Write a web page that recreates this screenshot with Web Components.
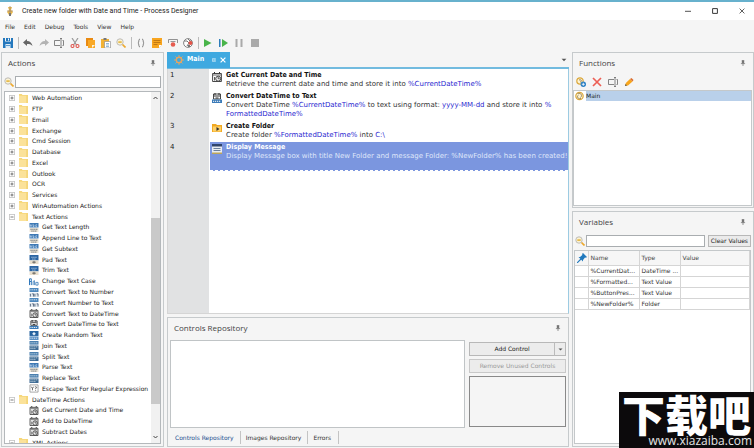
<!DOCTYPE html>
<html lang="en">
<head>
<meta charset="utf-8">
<title>Process Designer</title>
<style>
html,body{height:100%;margin:0}
body{font:6px/8px "DejaVu Sans",Verdana,sans-serif;color:#333;background:#f4f4f4;overflow:hidden;
--ui:#f5f5f5;--line:#c6cacc;--blue:#3fa9e0;--head:"Open Sans","Noto Sans",sans-serif}
</style>
</head>
<body>
<process-designer></process-designer>
<script>
const ICONS={
app:'<path d="M3 1h4l-1 3 2 2-2 3H4L2 6l2-2z" fill="#e8b84c"/><path d="M5 0v10M2 5h6" stroke="#a58a6a" stroke-width=".8"/><path d="M4 7h2v3H4z" fill="#777"/>',
save:'<path d="M0 0h2v3.500h6V0h2v10H0z" fill="#2478bd"/><path d="M3 0h4v3H3z" fill="#2478bd"/><path d="M5 .5h1v2H5z" fill="#fff"/><path d="M2.500 6h5v4h-5z" fill="#dcebf6"/><path d="M3 7.500h4" stroke="#2478bd" stroke-width=".7"/>',
undo:'<path d="M0 4.500 4 1v2c3 0 5 2 5.500 5C8 6.300 6.500 6 4 6v2z" fill="#666"/>',
redo:'<path d="M10 4.500 6 1v2C3 3 1 5 .5 8 2 6.300 3.500 6 6 6v2z" fill="#b3b3b3"/>',
rename:'<path d="M6 2.500H.5v5H6M8.500 2.500h1v5h-1" fill="none" stroke="#777" stroke-width=".9"/><path d="M6 .5h2M6 9.500h2M7 .5v9" stroke="#666" stroke-width=".8"/>',
cut:'<path d="M2 0 6.500 7M8 0 3.500 7" stroke="#999" stroke-width="1.200"/><circle cx="2.500" cy="8" r="1.500" fill="none" stroke="#e0564e" stroke-width="1.100"/><circle cx="7.500" cy="8" r="1.500" fill="none" stroke="#e0564e" stroke-width="1.100"/>',
copy:'<path d="M1 0h7v8H1z" fill="#e98a12"/><path d="M3 2h7v8H3z" fill="#f9a825"/><path d="M7 10V7h3z" fill="#fff3d9"/>',
paste:'<path d="M0 1h8v9H0z" fill="#f2b234"/><path d="M2.500 0h3v2h-3z" fill="#777"/><path d="M3.500 3.500H9.500v6.500h-6z" fill="#fff" stroke="#888" stroke-width=".6"/><path d="M5 5.500h3M5 7h3M5 8.500h3" stroke="#4d89bd" stroke-width=".6"/>',
find:'<circle cx="4" cy="4" r="3.200" fill="#fbf2d4" stroke="#b5b5b5" stroke-width=".9"/><path d="M2.300 3.300h3.400v1.600H2.300z" fill="#e2b53e"/><path d="m6.500 6.500 3 3" stroke="#eda92e" stroke-width="1.700"/>',
braces:'<path d="M4 1C2 1 3.500 4.500 2 5c1.500.5 0 4 2 4M6 1c2 0 .5 3.500 2 4-1.500.5 0 4-2 4" fill="none" stroke="#777" stroke-width=".9"/>',
note:'<path d="M0 0h10v7l-3 3H0z" fill="#f8a51f"/><path d="M1.500 2.500h7M1.500 4.500h7M1.500 6.500h4" stroke="#b36d10" stroke-width=".8"/><path d="M7 10V7h3z" fill="#fff"/>',
breakp:'<path d="M.5 5V1.500h9V5" fill="none" stroke="#888" stroke-width=".9"/><path d="M2.500 3.500h5" stroke="#999"/><circle cx="5" cy="6.500" r="2.300" fill="#e65d50"/>',
globe:'<circle cx="5" cy="5" r="4.400" fill="#fff" stroke="#777" stroke-width=".9"/><path d="M1 3h3l2 2-2 3M5 1l2 2h2" fill="none" stroke="#777"/><circle cx="7.500" cy="5" r="2" fill="#e45448"/><path d="m5 7 2 2M7 7 5 9" stroke="#777"/>',
play:'<path d="M1 1v8l7.500-4z" fill="#49b44a"/>',
step:'<path d="M0 1h1.500v8H0z" fill="#2d7dbb"/><path d="M3 1v8l6-4z" fill="#49b44a"/>',
pause:'<path d="M1.500 1h2v8h-2zM6.500 1h2v8h-2z" fill="#aaa"/>',
stop:'<path d="M1 1h8v8H1z" fill="#aaa"/>',
pin:'<path d="M3 1h4v4.500H3z" fill="#777"/><path d="M1.500 6h7M5 6v4M3 1h4" stroke="#555"/>',
gear:'<circle cx="5" cy="5" r="2.700" fill="none" stroke="#e7a55e" stroke-width="1.400"/><path d="M5 0v2M5 8v2M0 5h2M8 5h2M1.500 1.500 3 3M7 7l1.500 1.500M8.500 1.500 7 3M3 7 1.500 8.500" stroke="#d9a56a"/>',
close:'<path d="m1 1 8 8M9 1 1 9" stroke="currentColor" stroke-width="1.200"/>',
closeb:'<path d="m1 1 8 8M9 1 1 9" stroke="currentColor" stroke-width="2"/>',
lock:'<path d="M2 3h6M2 7h6M3 3v4M5 5h3" stroke="#e8f6fd" stroke-width="1.200"/>',
func:'<circle cx="5" cy="5" r="3.700" fill="#fff3cf" stroke="#dba83e" stroke-width="1.200"/><path d="M3 2.500C7 1.500 8 5 6 6.500M6.500 7.500C3 8.500 2 5 4 4" fill="none" stroke="#9c8a63"/>',
addf:'<circle cx="4" cy="4" r="3.200" fill="#fff3cf" stroke="#dba83e" stroke-width="1.200"/><path d="M3 3c3-1 3 2 1 2" fill="none" stroke="#98865f"/><circle cx="7.300" cy="7.300" r="2.700" fill="#2b80c4"/><path d="M5.800 7.300h3M7.300 5.800v3" stroke="#fff" stroke-width=".8"/>',
del:'<path d="m1 1 8 8M9 1 1 9" stroke="#ed5f55" stroke-width="1.700"/>',
pencil:'<path d="m1 9 .8-3L6 2l2.500 2.500L4 8.500z" fill="#f7a61d"/><path d="m6 2 1.500-1L9.500 3l-1 1.500z" fill="#db6f34"/><path d="m1 9 .5-2L3 8.500z" fill="#555"/>',
pushpin:'<path d="m6 0 4 4-1 .8-1-.2L6 7v1.500L1.500 4H3l2.300-2-.1-1.200z" fill="#1f78bd"/><path d="m4 6-4 4" stroke="#1f78bd" stroke-width="1.100"/>',
folder:'<path d="M0 0h3l1 1h6v9H0z" fill="#f5d679"/><path d="M0 2h8v8H0z" fill="#fbe29a"/>',
plus:'<path d="M.5.5h9v9h-9z" fill="#fff" stroke="#999"/><path d="M2.500 5h5M5 2.500v5" stroke="#555" stroke-width="1.300"/>',
minus:'<path d="M.5.5h9v9h-9z" fill="#fff" stroke="#999"/><path d="M2.500 5h5" stroke="#555" stroke-width="1.300"/>',
abc:'<path d="M0 0h10v5H0z" fill="#3c78b4"/><path d="M1 4V2h1v2M4 1v3h1V2.500M8.500 2H7v2h1.500" fill="none" stroke="#d6e6f5" stroke-width=".7"/><path d="M0 5.500h10V10H0z" fill="#ece5d6"/><path d="M1 7h8M2 9h6" stroke="#55626e" stroke-width=".9" stroke-dasharray="1.500 .6"/>',
pad:'<path d="M0 0h10v6H0z" fill="#2b65a3"/><path d="M2 2.500h6M3 4.500h4" stroke="#c6dcf1" stroke-width=".9" stroke-dasharray="1.500 .7"/><path d="M0 6h10v4H0z" fill="#e9dfcd"/><path d="M3 8h4M5 6.500v3" stroke="#555" stroke-width=".9"/>',
caseT:'<path d="M0 9V2h2v7M0 5h2" fill="none" stroke="#2e76ba" stroke-width="1.100"/><path d="M4 9V5l1.500-1v5M7 9V6h2.500v3H7" fill="none" stroke="#4b87bf"/>',
num:'<path d="M0 0h10v4.500H0z" fill="#4c87bd"/><path d="M1 2h8" stroke="#e1edf7" stroke-dasharray="1.300 .7"/><path d="M0 5.500h10V10H0z" fill="#dfe6ed"/><path d="M1 6.500v3M3 6.500h1.500v3M6 6.500v3M8 6.500h1.500v3" fill="none" stroke="#2f4661" stroke-width=".8"/>',
rnd:'<path d="M0 0h10v5.500H0z" fill="#27639f"/><path d="m5 1 2 2-2 2-2-2z" fill="#e8f1fa"/><path d="M0 6h10v4H0z" fill="#5a8fc3"/><path d="M1 8h8" stroke="#eaf3fb" stroke-dasharray="1.200 .8"/>',
join:'<path d="M0 0h10v4H0z" fill="#4a7fae"/><path d="M0 5h10v5H0z" fill="#3c6992"/><path d="M1 2h8M1 6.500h8M1 8.500h6" stroke="#d9e8ee" stroke-width=".9" stroke-dasharray="1.400 .7"/>',
regex:'<path d="M.5 1h9v8h-9z" fill="#fff" stroke="#888" stroke-width=".8"/><path d="m2 3 1.300 2L4.500 3M3.300 5v2M6 3.500c2-1.500 2.500 1 .8 1.500v.8M6.800 6.700v.8" fill="none" stroke="#333" stroke-width=".8"/>',
date:'<path d="M2.500 0v2M7.500 0v2" stroke="#333"/><path d="M.6 1.500h8.800v8H.6z" fill="#fff" stroke="#333" stroke-width=".9"/><path d="M1 3h8" stroke="#666"/><circle cx="6.200" cy="6.700" r="2.500" fill="#eee" stroke="#333" stroke-width=".9"/><path d="M6.200 5v1.700h1.500M2.500 5v3.500" stroke="#333" stroke-width=".8" fill="none"/>',
datetext:'<path d="M1.500 1h7v5h-7z" fill="#fff" stroke="#333" stroke-width=".9"/><path d="M3 0v2M7 0v2M2 3h6M3.500 5h3" stroke="#333"/><path d="M0 6.500h10V10H0z" fill="#3b7bb8"/><path d="M1 8.300h8" stroke="#fff" stroke-dasharray="1.200 .8"/>',
mkdir:'<path d="M0 1h4l1 1h5v7H0z" fill="#f1a922"/><path d="M1 3.500h8v5H1z" fill="#ffd067"/><path d="M4.500 4v4l3-2z" fill="#333"/>',
msg:'<path d="M0 0h10v10H0z" fill="#e9edf2"/><path d="M0 0h10v2.500H0z" fill="#30456b"/><path d="M1.500 4.500h7M1.500 6.500h7" stroke="#5f7593" stroke-width=".9"/><path d="M0 8.500h10V10H0z" fill="#bda55a"/>',
min:'<path d="M0 5.500h10" stroke="#222" stroke-width="1.300"/>',max:'<path d="M1 1h8v8H1z" fill="none" stroke="#222" stroke-width="1.500"/>',
down:'<path d="M1 3h8L5 7z" fill="#555"/>',arrowup:'<path d="m1 7 4-4 4 4" fill="none" stroke="#444" stroke-width="2"/>',arrowdown:'<path d="m1 3 4 4 4-4" fill="none" stroke="#444" stroke-width="2"/>'
};
const define=(name,html,setup)=>{
  const t=document.createElement('template');t.innerHTML=html;
  customElements.define(name,class extends HTMLElement{
    constructor(){super();this.attachShadow({mode:'open'}).append(t.content.cloneNode(true))}
    connectedCallback(){if(!this.ready){this.ready=true;setup&&setup(this,this.shadowRoot)}}
  });
};
const BTN='button{all:unset;box-sizing:border-box;display:flex;align-items:center;justify-content:center;cursor:default}';

define('ui-icon','<style>:host{display:block;flex:none;width:10px;height:10px}svg{display:block;width:100%;height:100%}</style><svg viewBox="0 0 10 10" aria-hidden="true"></svg>',
(h,r)=>{r.querySelector('svg').innerHTML=ICONS[h.getAttribute('name')]});

define('icon-button',`<style>:host{display:block;flex:none;width:10px;height:10px}${BTN}button,ui-icon{width:100%;height:100%}</style><button></button>`,
(h,r)=>{const b=r.querySelector('button');b.setAttribute('aria-label',h.getAttribute('label'));b.innerHTML=`<ui-icon name="${h.getAttribute('name')}"></ui-icon>`});

define('title-bar',`<style>:host{display:flex;align-items:center;gap:7px;height:18px;padding:0 9px 0 5px;border-top:2px solid #67b1cd;background:#fff;font:7px/10px Roboto,sans-serif;color:#222}
h1{font:inherit;margin:0;flex:1}.w{display:flex;gap:21px}.w icon-button{width:6px;height:6px}</style>
<ui-icon name="app"></ui-icon><h1><slot></slot></h1>
<div class="w"><icon-button name="min" label="Minimize"></icon-button><icon-button name="max" label="Maximize"></icon-button><icon-button name="close" label="Close"></icon-button></div>`);

define('menu-bar',`<style>:host{display:flex;gap:9px;height:14px;padding:0 5px;align-items:center}${BTN}</style>`,
(h,r)=>{for(const m of ['File','Edit','Debug','Tools','View','Help']){const b=document.createElement('button');b.textContent=m;r.append(b)}});

define('tool-bar',`<style>:host{display:flex;justify-content:space-between;width:257px;height:17px;padding:0 3px 1px;align-items:center}i{width:1px;height:12px;background:#bbb;margin:0 -1px}</style>`,
(h,r)=>{r.innerHTML+=h.getAttribute('items').split(' ').map(n=>n==='|'?'<i></i>':`<icon-button name="${n}" label="${n}"></icon-button>`).join('')});

define('dock-panel',`<style>:host{display:flex;flex-direction:column;min-width:0;min-height:0;box-sizing:border-box;border:1px solid var(--line);background:var(--ui)}
header{display:flex;align-items:center;justify-content:space-between;box-sizing:border-box;height:20px;padding:0 7px 1px 6px;flex:none}h2{margin:0;font:8px/12px var(--head);color:#444}
icon-button{width:6px;height:6px}</style>
<header><h2></h2><icon-button name="pin" label="Pin"></icon-button></header><slot></slot>`,
(h,r)=>{r.querySelector('h2').textContent=h.getAttribute('heading')});

define('search-field',`<style>:host{display:flex;align-items:center;gap:1px;height:12px;padding:0 2px;flex:1}
input{flex:1;min-width:0;height:100%;box-sizing:border-box;border:1px solid #a9adb0;background:#fff;padding:0 2px;font:inherit;outline:0}</style>
<ui-icon name="find"></ui-icon><input type="text">`,(h,r)=>{r.querySelector('input').setAttribute('aria-label',h.getAttribute('label'))});

define('action-tree',`<style>:host{display:flex;flex:1;min-height:0;overflow:hidden;border:1px solid #b4b8bb;background:#fff}
ul{list-style:none;margin:0 0 -5px;padding:1px 0 0 4px;flex:1;min-width:0;display:grid;grid-auto-rows:minmax(0,1fr)}
li{display:flex;align-items:center;gap:4px;white-space:nowrap;min-height:0;color:#222}
li.leaf{padding-left:20px;gap:3px}li icon-button{width:6px;height:6px}li ui-icon{width:9px;height:9px}.leaf ui-icon{width:10px}
.sb{width:9px;background:#f1f1f1;display:flex;flex-direction:column;align-items:center}.sb icon-button{width:5px;height:12px}
.track{flex:1;align-self:stretch;display:grid;grid-template-rows:115fr 187fr 27fr}.thumb{grid-row:2;background:#c9c9c9}</style>
<ul></ul><div class="sb"><icon-button name="arrowup" label="Scroll up"></icon-button><div class="track"><div class="thumb"></div></div><icon-button name="arrowdown" label="Scroll down"></icon-button></div>`,
(h,r)=>{const rows=`+Web Automation;+FTP;+Email;+Exchange;+Cmd Session;+Database;+Excel;+Outlook;+OCR;+Services;+WinAutomation Actions;-Text Actions;abc:Get Text Length;abc:Append Line to Text;abc:Get Subtext;pad:Pad Text;pad:Trim Text;caseT:Change Text Case;num:Convert Text to Number;num:Convert Number to Text;date:Convert Text to DateTime;datetext:Convert DateTime to Text;rnd:Create Random Text;join:Join Text;join:Split Text;abc:Parse Text;join:Replace Text;regex:Escape Text For Regular Expression;-DateTime Actions;date:Get Current Date and Time;date:Add to DateTime;date:Subtract Dates;-XML Actions`.split(';');
r.querySelector('ul').innerHTML=rows.map(x=>{const c=x[0];if(c==='+'||c==='-')return `<li><icon-button name="${c==='+'?'plus':'minus'}" label="${c==='+'?'Expand':'Collapse'}"></icon-button><ui-icon name="folder"></ui-icon><span>${x.slice(1)}</span></li>`;
const [i,t]=x.split(':');return `<li class="leaf"><ui-icon name="${i}"></ui-icon><span>${t}</span></li>`}).join('')});

define('process-step',`<style>:host{display:grid;grid-template-columns:42px 1fr;font:7px/9px "DejaVu Sans",Verdana,sans-serif;color:#333}
.n{padding:1px 2px;color:#222}.b{display:grid;grid-template-columns:10px 1fr;gap:4px;padding:1px 0 2px 2px;min-width:0}
h3{margin:0;font:bold 7px/9px "DejaVu Sans Condensed","DejaVu Sans",sans-serif;color:#111}p{margin:0;white-space:nowrap}::slotted(b){font-weight:normal;color:#2a1fd0}
:host([selected]) .b{background:#7b96df;color:#dfe6fa;padding-bottom:9px;border-bottom:1px dashed #fff}:host([selected]) h3{color:#fff}ui-icon{margin-top:1px}</style>
<span class="n"></span><div class="b"><ui-icon></ui-icon><div><h3></h3><p><slot></slot></p></div></div>`,
(h,r)=>{r.querySelector('.n').textContent=h.getAttribute('n');r.querySelector('h3').textContent=h.getAttribute('heading');
const i=document.createElement('ui-icon');i.setAttribute('name',h.getAttribute('icon'));r.querySelector('ui-icon').replaceWith(i)});

define('process-editor',`<style>:host{display:flex;flex-direction:column;min-width:0;min-height:0}
.tabs{display:flex;justify-content:space-between;align-items:center;height:15px;border-bottom:2px solid #72bbdf;padding-right:2px}
.tab{display:flex;align-items:center;gap:3px;padding:0 4px 0 7px;height:16px;background:var(--blue);color:#fff;font:bold 7px/9px "DejaVu Sans Condensed",sans-serif}
.tab .s{width:6px;height:6px}.tab ui-icon.s{margin-left:4px}.m{width:6px;height:6px}
main{flex:1;border-right:1px solid #9ccbe2;border-left:1px solid #d5d5d5;border-bottom:1px solid #d5d5d5;background:linear-gradient(90deg,#e1e2e3 41px,#fff 41px);padding-top:1px}</style>
<div class="tabs"><div class="tab"><ui-icon name="gear"></ui-icon><span>Main</span><ui-icon class="s" name="lock"></ui-icon><icon-button class="s" name="closeb" label="Close tab"></icon-button></div><icon-button class="m" name="down" label="Tab list"></icon-button></div>
<main><slot></slot></main>`);

define('controls-repository',`<style>:host{display:flex;flex-direction:column;flex:1;min-height:0}
.row{flex:1;display:grid;grid-template-columns:1fr 97px;gap:4px;padding:2px 2px 0}.list{border:1px solid #c0c4c6;background:#fff}
.side{display:grid;grid-template-rows:14px 14px 1fr;gap:3px;padding:2px 0 1px}${BTN}
.side button{border:1px solid #b8b8b8;background:#ececec;color:#222}.side button:disabled{color:#999;border-color:#c8c8c8}
.add{display:grid;grid-template-columns:1fr 11px}.side .add button+button{border-left:1px solid #bbb;margin-left:-1px}.add ui-icon{width:5px;height:5px}
.prev{border:1px solid #898989}nav{display:flex;height:17px;align-items:center;margin-top:1px}
nav button{padding:0 6px 0 5px;height:13px;border-right:1px solid #c4c4c4}nav button:first-child{padding-left:7px;padding-right:6px;color:#1b4f8f}nav button:last-child{padding-right:7px}</style>
<div class="row"><div class="list"></div><div class="side"><div class="add"><button>Add Control</button><button aria-label="More controls"><ui-icon name="down"></ui-icon></button></div><button disabled>Remove Unused Controls</button><div class="prev"></div></div></div>
<nav><button>Controls Repository</button><button>Images Repository</button><button>Errors</button></nav>`);

define('function-list',`<style>:host{display:flex;flex-direction:column;flex:1}.t{display:flex;gap:6px;height:17px;padding:0 3px;align-items:center}
ul{list-style:none;margin:0 1px 1px 0;padding:0;flex:1;background:#fff;border:1px solid #c4c8ca}li{display:flex;align-items:center;gap:1px;height:10px}ui-icon{width:11px}span{flex:1;background:#b9d0ea;padding:1px 0 1px;color:#222}</style>
<div class="t"><icon-button name="addf" label="Add function"></icon-button><icon-button name="del" label="Delete function"></icon-button><icon-button name="rename" label="Rename function"></icon-button><icon-button name="pencil" label="Edit function"></icon-button></div>
<ul><li><ui-icon name="func"></ui-icon><span>Main</span></li></ul>`);

define('variable-table',`<style>:host{display:flex;flex-direction:column;flex:1;min-height:0}.s{display:flex;gap:1px;padding:3px 2px 3px 0}${BTN}
.s button{border:1px solid #b8b8b8;background:#ebebeb;padding:0 2px;color:#222}.g{flex:1;background:#fff;border:1px solid #c4c8ca;margin:0 2px 2px 1px}
table{width:100%;table-layout:fixed;border-collapse:collapse}col:nth-child(1){width:13px}col:nth-child(2){width:51px}col:nth-child(3){width:41px}
th,td{box-sizing:border-box;border:0 solid #d5d5d5;border-width:0 1px 1px 0;height:11px;padding:0 2px;text-align:left;font-weight:normal;overflow:hidden;white-space:nowrap;text-overflow:clip;line-height:8px}th{height:14px;background:#f6f6f6;color:#444}</style>
<div class="s"><search-field label="Search variables"></search-field><button>Clear Values</button></div>
<div class="g"><table><colgroup><col><col><col><col></colgroup><thead><tr><th><ui-icon name="pushpin"></ui-icon></th><th>Name</th><th>Type</th><th>Value</th></tr></thead>
<tbody><tr><td></td><td>%CurrentDat...</td><td>DateTime ...</td><td></td></tr><tr><td></td><td>%Formatted...</td><td>Text Value</td><td></td></tr><tr><td></td><td>%ButtonPres...</td><td>Text Value</td><td></td></tr><tr><td></td><td>%NewFolder%</td><td>Folder</td><td></td></tr></tbody></table></div>`);

define('site-badge',`<style>:host{position:absolute;right:0;bottom:0;background:#0c0a0c;color:#fff;width:135px;height:56px;display:flex;flex-direction:column;align-items:center}
strong{font:900 43px/42px "Noto Sans CJK SC",sans-serif;white-space:nowrap}span{font:12px/14px "Open Sans",sans-serif;align-self:flex-end;padding-right:2px;color:#e6e6e6}</style>
<strong>下载吧</strong><span>www.xiazaiba.com</span>`);

define('process-designer',`<style>:host{display:flex;flex-direction:column;height:100vh;position:relative;background:var(--ui)}
.work{flex:1;min-height:0;display:grid;grid-template-columns:163fr 402fr 182fr;gap:3px;padding:0 0 1px 1px}
.col{display:grid;min-width:0;min-height:0;gap:3px}.mid{grid-template-rows:262fr 130fr}.right{grid-template-rows:156fr 235fr}
.find{flex:none;margin:3px 0 3px}action-tree{margin:0 2px 2px}</style>
<title-bar>Create new folder with Date and Time - Process Designer</title-bar>
<menu-bar></menu-bar>
<tool-bar items="save | undo redo rename cut copy paste find | braces note breakp globe | play step pause stop"></tool-bar>
<div class="work">
<dock-panel heading="Actions"><search-field class="find" label="Search actions"></search-field><action-tree></action-tree></dock-panel>
<div class="col mid"><process-editor>
<process-step n="1" icon="date" heading="Get Current Date and Time">Retrieve the current date and time and store it into <b>%CurrentDateTime%</b></process-step>
<process-step n="2" icon="datetext" heading="Convert DateTime to Text">Convert DateTime <b>%CurrentDateTime%</b> to text using format: <b>yyyy-MM-dd</b> and store it into <b>%<br>FormattedDateTime%</b></process-step>
<process-step n="3" icon="mkdir" heading="Create Folder">Create folder <b>%FormattedDateTime%</b> into <b>C:\\</b></process-step>
<process-step n="4" icon="msg" selected heading="Display Message">Display Message box with title New Folder and message Folder: %NewFolder% has been created!</process-step>
</process-editor>
<dock-panel heading="Controls Repository"><controls-repository></controls-repository></dock-panel></div>
<div class="col right"><dock-panel heading="Functions"><function-list></function-list></dock-panel>
<dock-panel heading="Variables"><variable-table></variable-table></dock-panel></div>
</div>
<site-badge></site-badge>`);
</script>
</body>
</html>
